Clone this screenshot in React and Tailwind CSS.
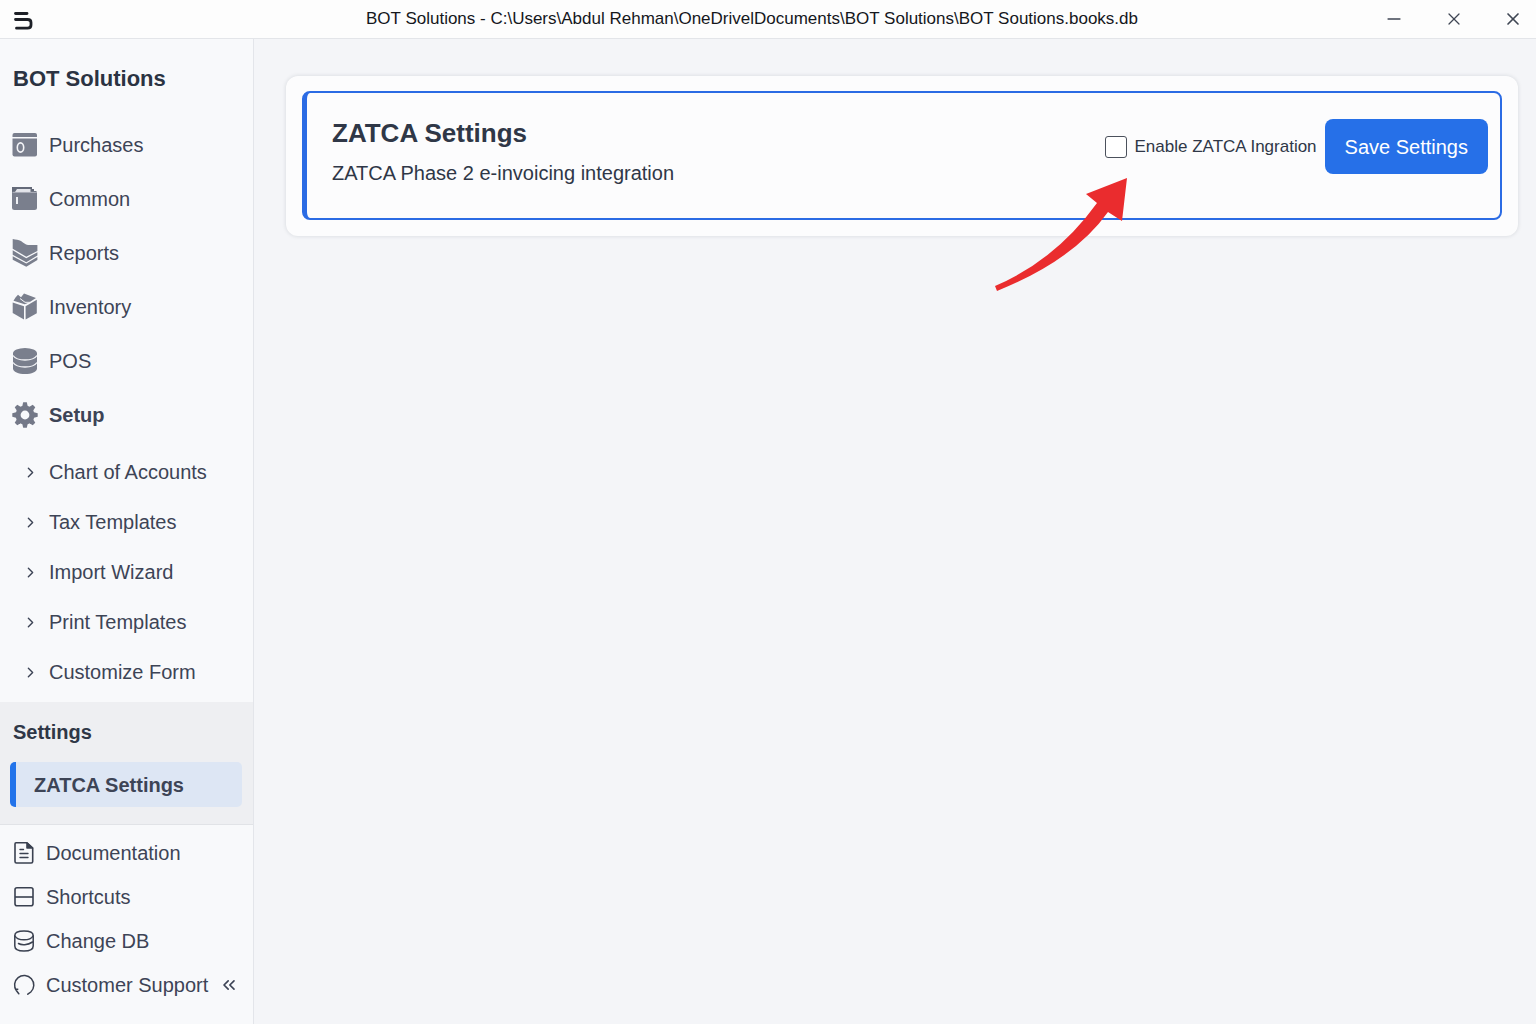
import React, { useState } from 'react';
import { ChevronRight, ChevronsLeft, Minus, X } from 'lucide-react';

const PurchasesIcon = () => (
  <svg viewBox="0 0 26 26" className="w-[26px] h-[26px] shrink-0" fill="#7a7f8d" aria-hidden="true">
    <path d="M0.5 5V3Q0.5 1 2.5 1H23Q25 1 25 3V5Z" />
    <path d="M0.5 6.5H25V22.5Q25 24.5 23 24.5H2.5Q0.5 24.5 0.5 22.5Z" />
    <ellipse cx="8.5" cy="15.5" rx="3.2" ry="4.6" fill="none" stroke="#f3f4f7" strokeWidth="1.6" />
  </svg>
);

const CommonIcon = () => (
  <svg viewBox="0 0 26 26" className="w-[26px] h-[26px] shrink-0" aria-hidden="true">
    <path d="M0 1H20V3H22V5H24.5V8H0Z" fill="#646a79" />
    <path d="M5 3H18.5V6H3Z" fill="#e3e5ea" />
    <path d="M0 6.5H25V21.5Q25 24 22.5 24H2.5Q0 24 0 21.5Z" fill="#7a7f8d" />
    <path d="M0.5 6.3H24.5" stroke="#d5d8df" strokeWidth="0.7" />
    <rect x="4" y="11" width="2" height="7" fill="#eef0f4" />
  </svg>
);

const ReportsIcon = () => (
  <svg viewBox="0 0 26 28" className="w-[26px] h-[28px] shrink-0" fill="#7a7f8d" aria-hidden="true">
    <path d="M0.7 0C4 1 6.5 0.5 9 2C12 4 13 5.5 16 6H25.4V11.9L14.3 17.7L0.7 9.7Z" />
    <path d="M0.7 11.3L14.3 19.3L25.4 13.2V16.6L14.3 23.2L0.7 15.7Z" />
    <path d="M0.7 17.2L14.3 24.6L25.4 18V21L14.3 27.7L0.7 20.7Z" />
  </svg>
);

const InventoryIcon = () => (
  <svg viewBox="0 0 26 28" className="w-[26px] h-[28px] shrink-0" fill="#7a7f8d" aria-hidden="true">
    <path d="M0.7 9.5L12 13.2V26.5L0.7 20Z" />
    <path d="M13.6 13.2L24.8 6.8V20.3L13.6 26.5Z" />
    <path d="M1.5 7.7L3.5 4.5L6 1.7L9 4.3L12 0.5L24 5L17 9.5L12.7 11.3Z" />
    <path d="M8 5.5L13 9.3L18 9.3" fill="none" stroke="#f3f4f7" strokeWidth="1" />
  </svg>
);

const PosIcon = () => (
  <svg viewBox="0 0 26 28" className="w-[26px] h-[28px] shrink-0" aria-hidden="true">
    <path d="M1 6V21.5C1 25 6.5 27 13 27S25 25 25 21.5V6Z" fill="#7a7f8d" />
    <ellipse cx="13" cy="6.5" rx="12" ry="5.6" fill="#7a7f8d" />
    <path d="M1 8.5C3 11.5 7.5 13 13 13S23 11.5 25 8.5" fill="none" stroke="#f3f4f7" strokeWidth="1.3" />
    <path d="M1 15.5C3 18.5 7.5 20 13 20S23 18.5 25 15.5" fill="none" stroke="#f3f4f7" strokeWidth="1.3" />
  </svg>
);

const SetupIcon = () => (
  <svg viewBox="0 0 26 26" className="w-[26px] h-[26px] shrink-0" aria-hidden="true">
    {[0, 45, 90, 135].map((angle) => (
      <path
        key={angle}
        d="M10.3 4L11.2 0.3H14.8L15.7 4V22L14.8 25.7H11.2L10.3 22Z"
        fill="#747988"
        transform={`rotate(${angle} 13 13)`}
      />
    ))}
    <circle cx="13" cy="13" r="9.5" fill="#747988" />
    <circle cx="13" cy="13" r="4.4" fill="#f8f9fb" />
  </svg>
);

const DocumentIcon = () => (
  <svg viewBox="0 0 22 24" className="w-[22px] h-[24px] shrink-0" fill="none" stroke="#3a4150" strokeWidth="1.6" strokeLinejoin="round" strokeLinecap="round" aria-hidden="true">
    <path d="M3 1.8H14L19.7 7V20.5Q19.7 22 18.2 22H3.5Q2 22 2 20.5V3Q2 1.8 3 1.8Z" />
    <path d="M14 2V7H19.5Z" fill="#3a4150" />
    <path d="M7 8.5H10.5M7 12.5H15M7 16.5H15" strokeWidth="1.4" />
  </svg>
);

const ShortcutsIcon = () => (
  <svg viewBox="0 0 22 22" className="w-[22px] h-[22px] shrink-0" fill="none" stroke="#3a4150" strokeWidth="1.6" aria-hidden="true">
    <rect x="2" y="1.8" width="18" height="18" rx="2" />
    <path d="M2 11H20" />
  </svg>
);

const DatabaseIcon = () => (
  <svg viewBox="0 0 22 22" className="w-[22px] h-[22px] shrink-0" fill="none" stroke="#3a4150" strokeWidth="1.5" strokeLinecap="round" aria-hidden="true">
    <path d="M1.8 5.5C1.8 2 6.5 1 11 1S20.2 2 20.2 5.5V16C20.2 20 15.5 21 11 21S1.800 20 1.800 16Z" />
    <path d="M2 6C3.500 9 7.500 9.800 11 9.800S18.500 9 20 6M5.500 13.500C8.500 15.300 14.500 15.300 19.500 12" />
  </svg>
);

const SupportIcon = () => (
  <svg viewBox="0 0 22 22" className="w-[22px] h-[22px] shrink-0" fill="none" stroke="#3a4150" strokeWidth="1.5" strokeLinecap="round" aria-hidden="true">
    <path d="M5.8 19.800L3.500 16.800A9.600 9.600 0 1 1 17.800 18L14.800 20.200M2.500 15.500L4.800 15.200" />
  </svg>
);

const navItems = [
  { label: 'Purchases', icon: PurchasesIcon },
  { label: 'Common', icon: CommonIcon },
  { label: 'Reports', icon: ReportsIcon },
  { label: 'Inventory', icon: InventoryIcon },
  { label: 'POS', icon: PosIcon },
  { label: 'Setup', icon: SetupIcon, active: true },
];

const setupItems = [
  'Chart of Accounts',
  'Tax Templates',
  'Import Wizard',
  'Print Templates',
  'Customize Form',
];

const footerItems = [
  { label: 'Documentation', icon: DocumentIcon },
  { label: 'Shortcuts', icon: ShortcutsIcon },
  { label: 'Change DB', icon: DatabaseIcon },
  { label: 'Customer Support', icon: SupportIcon },
];

function TitleBar() {
  return (
    <header className="grid grid-cols-[120px_1fr_152px] items-center h-[39px] bg-[#fdfdfd] border-b border-[#e3e5e9]">
      <svg viewBox="0 0 20 20" className="w-5 h-5 mt-1 ml-[13px]" fill="none" stroke="#1d2027" strokeWidth="2.8" strokeLinecap="round" aria-hidden="true">
        <path d="M2.5 2.5H14" />
        <path d="M2.5 8.5H14.5Q18 8.5 18 11.5V14Q18 17.2 14.5 17.2H3.5" />
      </svg>
      <p className="text-center text-[17px] leading-6 text-[#15171c] whitespace-nowrap">
        BOT Solutions - C:\Users\Abdul Rehman\OneDrivelDocuments\BOT Solutions\BOT Soutions.books.db
      </p>
      <div className="flex items-center justify-between pr-[13px] text-[#3f4654]">
        <button aria-label="Minimize">
          <Minus className="w-5 h-5" strokeWidth={2} />
        </button>
        <button aria-label="Restore">
          <X className="w-5 h-5" strokeWidth={1.5} />
        </button>
        <button aria-label="Close">
          <X className="w-5 h-5" strokeWidth={2} />
        </button>
      </div>
    </header>
  );
}

function Sidebar() {
  return (
    <aside className="w-[254px] shrink-0 bg-[#f8f9fb] border-r border-[#e3e5ea] text-xl text-[#3d4456]">
      <h1 className="px-[13px] pt-[26px] pb-[25px] text-[22px] leading-7 font-bold text-[#2b3342]">
        BOT Solutions
      </h1>

      <nav>
        {navItems.map(({ label, icon: Icon, active }) => (
          <a key={label} href="#" className="flex items-center gap-[11px] h-[54px] px-3">
            <Icon />
            <span className={active ? 'font-bold' : ''}>{label}</span>
          </a>
        ))}

        <div className="pt-[5px] pb-[5px]">
          {setupItems.map((label) => (
            <a key={label} href="#" className="flex items-center gap-2.5 h-[50px] pl-[22px]">
              <ChevronRight className="w-[17px] h-[17px]" strokeWidth={2} />
              {label}
            </a>
          ))}
        </div>

        {/* Settings */}
        <div className="bg-[#eeeff2] border-b border-[#e1e3e7] pt-4 pb-[17px]">
          <h2 className="px-[13px] mb-4 leading-7 font-bold text-[#2f3747]">Settings</h2>
          <a
            href="#"
            className="flex items-center h-[45px] ml-2.5 mr-[11px] pl-[18px] rounded-[5px] border-l-[6px] border-[#2273ea] bg-[#dde6f4] font-bold"
          >
            ZATCA Settings
          </a>
        </div>

        {/* Footer links */}
        <div className="pt-1.5">
          {footerItems.map(({ label, icon: Icon }) => (
            <div key={label} className="flex items-center justify-between h-11 pl-[13px] pr-[14px]">
              <a href="#" className="flex items-center gap-[11px]">
                <Icon />
                {label}
              </a>
              {label === 'Customer Support' && (
                <button aria-label="Collapse sidebar">
                  <ChevronsLeft className="w-5 h-5" strokeWidth={2} />
                </button>
              )}
            </div>
          ))}
        </div>
      </nav>
    </aside>
  );
}

function App() {
  const [enabled, setEnabled] = useState(false);

  return (
    <div className="min-h-screen flex flex-col bg-[#f4f5f8] font-['Liberation_Sans',Arial,sans-serif]">
      <TitleBar />
      <div className="flex flex-1">
        <Sidebar />

        <main className="flex-1 pl-8 pr-[18px] pt-[37px]">
          <section className="relative p-4 pt-[15px] rounded-xl bg-[#fcfcfd] shadow-[0_0_4px_rgba(30,41,59,0.14)]">
            <div className="flex items-start justify-between rounded-lg border-2 border-l-[5px] border-[#2b6be4] pl-[25px] pr-3 pt-6 pb-[29px]">
              <div className="text-[#2f3747]">
                <h2 className="text-[26px] leading-8 font-bold">ZATCA Settings</h2>
                <p className="mt-2 text-xl leading-8">ZATCA Phase 2 e-invoicing integration</p>
              </div>

              <div className="flex items-center gap-2 pt-0.5">
                <label className="flex items-center gap-2 text-[17px] leading-6 text-[#2f3747]">
                  <input
                    type="checkbox"
                    checked={enabled}
                    onChange={(e) => setEnabled(e.target.checked)}
                    className="appearance-none w-[22px] h-[22px] rounded-[3px] border border-[#4b515c] bg-white checked:bg-[#2670e8]"
                  />
                  Enable ZATCA Ingration
                </label>
                <button className="h-[55px] px-5 rounded-lg bg-[#2670e8] text-xl text-white whitespace-nowrap">
                  Save Settings
                </button>
              </div>
            </div>

            {/* Arrow pointing at the checkbox */}
            <svg
              viewBox="0 0 142 124"
              className="absolute right-[386px] top-24 w-[142px] h-[124px] pointer-events-none"
              aria-hidden="true"
            >
              <path d="M137 6L96 22L107 31Q66 88 5 114L7 119Q84 88 118 40L132 49Z" fill="#ea2c2e" />
            </svg>
          </section>
        </main>
      </div>
    </div>
  );
}

export default App;
